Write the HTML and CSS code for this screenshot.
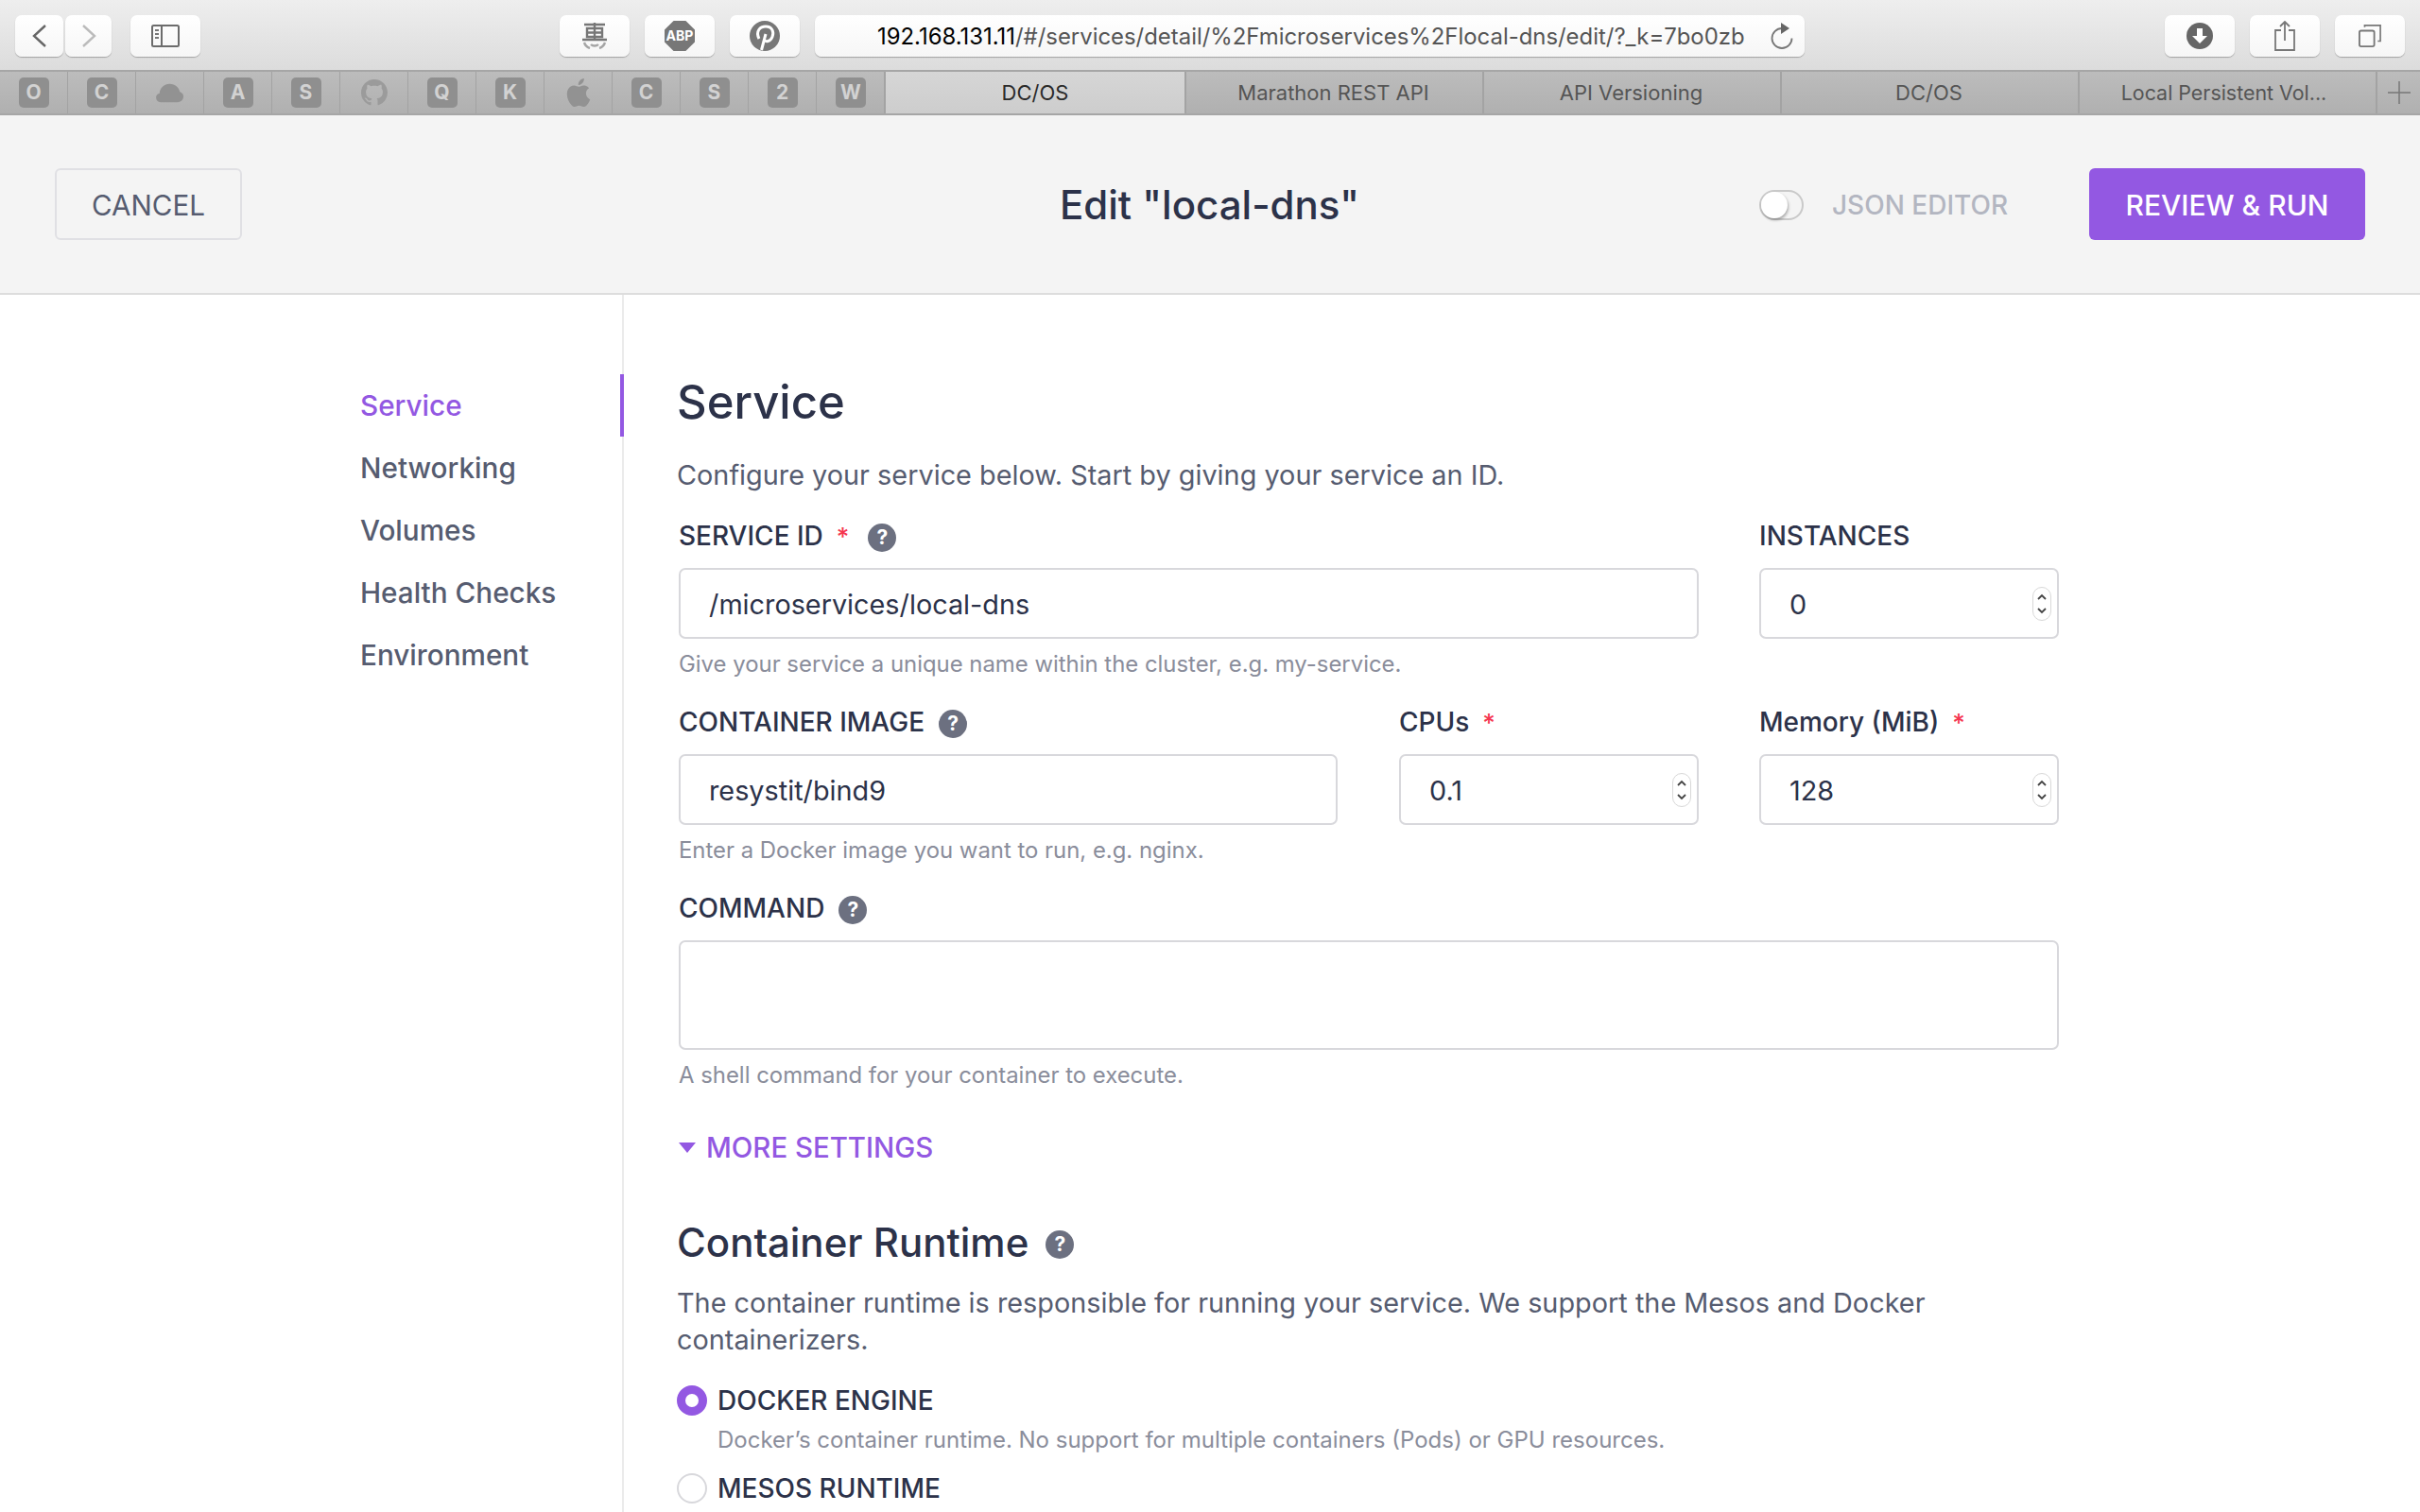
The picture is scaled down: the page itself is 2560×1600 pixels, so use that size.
FILE: index.html
```html
<!DOCTYPE html>
<html lang="en">
<head>
  <meta charset="UTF-8" />
  <title>DC/OS - Edit service</title>
  <link rel="stylesheet" href="styles.css">
</head>
<body>
  <div class="toolbar">
    <div class="tool-btn nav-left">
      <svg width="16" height="24" viewBox="0 0 16 24"><path d="M14 1 2 12l12 11" fill="none" stroke="#666" stroke-width="2.4"/></svg>
    </div>
    <div class="tool-btn nav-right">
      <svg width="16" height="24" viewBox="0 0 16 24"><path d="M2 1l12 11L2 23" fill="none" stroke="#bbb" stroke-width="2.4"/></svg>
    </div>
    <div class="tool-btn sidebar-btn">
      <svg width="30" height="24" viewBox="0 0 30 24"><rect x="1" y="1" width="28" height="22" rx="1.5" fill="none" stroke="#6c6c6c" stroke-width="2"/><path d="M11 1v22" stroke="#6c6c6c" stroke-width="2"/><path d="M4 6h4M4 10h4M4 14h4" stroke="#777" stroke-width="2"/></svg>
    </div>

    <div class="ext-group">
      <div class="tool-btn ext-btn">
        <svg width="32" height="28" viewBox="0 0 32 28"><g fill="none" stroke="#777" stroke-width="2.4"><path d="M5 2h22M16 0v18M8 6h16v9H8zM8 10.500h16M3 18h26"/><path d="M5 21c1 3 3 5 6 6M27 21c-1 3-3 5-6 6M12 23c2 2 6 2 8 0" stroke="#a5a5a5"/></g></svg>
      </div>
      <div class="tool-btn ext-btn">
        <div class="abp-icon">ABP</div>
      </div>
      <div class="tool-btn ext-btn">
        <svg width="32" height="32" viewBox="0 0 32 32"><circle cx="16" cy="16" r="16" fill="#777"/><path d="M12.500 31 17 14M10 19C6 11 11 6 17 6c7 0 9 6 7 11-2 5-7 6-9 3" fill="none" stroke="#fff" stroke-width="3"/></svg>
      </div>
    </div>

    <div class="url-bar">
      <div class="url-text"><span class="url-host">192.168.131.11</span>/#/services/detail/%2Fmicroservices%2Flocal-dns/edit/?_k=7bo0zb</div>
      <svg class="reload" width="24" height="30" viewBox="12 8 24 30"><path d="M24 15a10.500 10.500 0 1 0 10.500 10.500" fill="none" stroke="#777" stroke-width="1.800"/><path d="M23 9l9 6-9 6z" fill="#666"/></svg>
    </div>

    <div class="tool-btn right-btn">
      <svg width="28" height="28" viewBox="0 0 28 28"><circle cx="14" cy="14" r="14" fill="#666"/><path d="M11 6h6v8h5l-8 8-8-8h5z" fill="#fff"/></svg>
    </div>
    <div class="tool-btn right-btn">
      <svg width="24" height="32" viewBox="0 0 24 32"><path d="M8 10H2v21h20V10h-6" fill="none" stroke="#777" stroke-width="1.800"/><path d="M12 21V2M7 6l5-5 5 5" fill="none" stroke="#777" stroke-width="1.800"/></svg>
    </div>
    <div class="tool-btn right-btn">
      <svg width="24" height="24" viewBox="0 0 26 26"><rect x="1" y="7" width="17" height="18" rx="2" fill="none" stroke="#777" stroke-width="2"/><path d="M7 3V1h18v18h-3" fill="none" stroke="#777" stroke-width="1.800"/></svg>
    </div>
  </div>

  <div class="tabbar">
    <div class="fav"><span class="fav-box">O</span></div>
    <div class="fav"><span class="fav-box">C</span></div>
    <div class="fav">
      <svg width="31" height="21" viewBox="0 0 32 26" preserveAspectRatio="none"><path d="M7 25a6 6 0 0 1-2-11.600C5 7 10 1 16 1s10 5 11 10a7.500 7.500 0 0 1-2 14z" fill="#929292"/></svg>
    </div>
    <div class="fav"><span class="fav-box">A</span></div>
    <div class="fav"><span class="fav-box">S</span></div>
    <div class="fav">
      <svg width="28" height="28" viewBox="0 0 16 16"><path fill="#9b9b9b" d="M8 0C3.580 0 0 3.580 0 8c0 3.540 2.290 6.530 5.470 7.590.4.070.55-.17.55-.38 0-.19-.01-.82-.01-1.490-2.010.37-2.530-.49-2.690-.94-.09-.23-.48-.94-.82-1.130-.28-.15-.68-.52-.01-.53.63-.01 1.080.58 1.230.82.72 1.210 1.870.87 2.330.66.070-.52.28-.87.51-1.070-1.780-.2-3.640-.89-3.640-3.950 0-.87.31-1.590.82-2.150-.08-.2-.36-1.020.08-2.120 0 0 .67-.21 2.200.82.64-.18 1.320-.27 2-.27.68 0 1.360.09 2 .27 1.530-1.040 2.200-.82 2.200-.82.44 1.100.16 1.920.08 2.120.51.56.82 1.270.82 2.150 0 3.070-1.870 3.750-3.650 3.950.29.25.54.73.54 1.480 0 1.070-.01 1.930-.01 2.200 0 .21.15.46.55.38A8.013 8.013 0 0 0 16 8c0-4.420-3.580-8-8-8z"/></svg>
    </div>
    <div class="fav"><span class="fav-box">Q</span></div>
    <div class="fav"><span class="fav-box">K</span></div>
    <div class="fav">
      <svg width="38" height="38" viewBox="0 0 24 24"><path fill="#929292" d="M17 12.500c0-2.300 1.900-3.400 2-3.500-1.100-1.600-2.800-1.800-3.400-1.800-1.400-.1-2.800.9-3.500.9-.7 0-1.900-.8-3.100-.8-1.600 0-3.100.9-3.900 2.300-1.700 2.900-.4 7.200 1.200 9.500.8 1.100 1.700 2.400 3 2.400 1.200 0 1.700-.8 3.100-.8 1.400 0 1.900.8 3.100.8 1.300 0 2.100-1.100 2.900-2.300.9-1.300 1.300-2.600 1.300-2.700-.1 0-2.600-1-2.700-4zM14.700 5.600c.7-.8 1.100-1.900 1-3-1 0-2.100.6-2.800 1.400-.6.7-1.200 1.900-1 2.900 1.100.1 2.200-.5 2.800-1.300z"/></svg>
    </div>
    <div class="fav"><span class="fav-box">C</span></div>
    <div class="fav"><span class="fav-box">S</span></div>
    <div class="fav"><span class="fav-box">2</span></div>
    <div class="fav fav-last"><span class="fav-box">W</span></div>
    <div class="tab tab-active">DC/OS</div>
    <div class="tab">Marathon REST API</div>
    <div class="tab">API Versioning</div>
    <div class="tab">DC/OS</div>
    <div class="tab tab-last">Local Persistent Vol...</div>
    <div class="tab-add">
      <svg width="24" height="24" viewBox="0 0 24 24"><path d="M12 0v24M0 12h24" stroke="#777" stroke-width="1.500"/></svg>
    </div>
  </div>

  <header class="page-header">
    <button class="btn btn-cancel">CANCEL</button>
    <h2 class="page-title">Edit "local-dns"</h2>
    <div class="json-toggle">
      <span class="switch"><span class="knob"></span></span>
      <span class="json-label">JSON EDITOR</span>
    </div>
    <button class="btn btn-run">REVIEW &amp; RUN</button>
  </header>

  <div class="main">
    <nav class="side-nav">
      <a class="nav-item active">Service</a>
      <a class="nav-item">Networking</a>
      <a class="nav-item">Volumes</a>
      <a class="nav-item">Health Checks</a>
      <a class="nav-item">Environment</a>
    </nav>

    <section class="content">
      <h1>Service</h1>
      <p class="lead">Configure your service below. Start by giving your service an ID.</p>

      <div class="form-row">
        <div class="field col-wide">
          <label>SERVICE ID <span class="req">*</span> <span class="help">?</span></label>
          <div class="input">/microservices/local-dns</div>
          <div class="hint">Give your service a unique name within the cluster, e.g. my-service.</div>
        </div>
        <div class="field col-small">
          <label>INSTANCES</label>
          <div class="input">0<span class="spin"><svg width="14" height="28" viewBox="0 0 12 28"><path d="M2 9l4-4 4 4M2 19l4 4 4-4" fill="none" stroke="#444" stroke-width="1.800"/></svg></span></div>
        </div>
      </div>

      <div class="form-row">
        <div class="field col-image">
          <label>CONTAINER IMAGE <span class="help">?</span></label>
          <div class="input">resystit/bind9</div>
          <div class="hint">Enter a Docker image you want to run, e.g. nginx.</div>
        </div>
        <div class="field col-small">
          <label>CPUs <span class="req">*</span></label>
          <div class="input">0.1<span class="spin"><svg width="14" height="28" viewBox="0 0 12 28"><path d="M2 9l4-4 4 4M2 19l4 4 4-4" fill="none" stroke="#444" stroke-width="1.800"/></svg></span></div>
        </div>
        <div class="field col-small">
          <label>Memory (MiB) <span class="req">*</span></label>
          <div class="input">128<span class="spin"><svg width="14" height="28" viewBox="0 0 12 28"><path d="M2 9l4-4 4 4M2 19l4 4 4-4" fill="none" stroke="#444" stroke-width="1.800"/></svg></span></div>
        </div>
      </div>

      <div class="form-row">
        <div class="field col-full">
          <label>COMMAND <span class="help">?</span></label>
          <div class="input textarea"></div>
          <div class="hint">A shell command for your container to execute.</div>
        </div>
      </div>

      <a class="more-settings"><span class="caret"></span>MORE SETTINGS</a>

      <h3 class="section-title">Container Runtime <span class="help help-big">?</span></h3>
      <p class="lead lead-wrap">The container runtime is responsible for running your service. We support the Mesos and Docker containerizers.</p>

      <div class="radio-row">
        <span class="radio radio-on"></span>
        <span class="radio-label">DOCKER ENGINE</span>
      </div>
      <div class="radio-desc">Docker’s container runtime. No support for multiple containers (Pods) or GPU resources.</div>
      <div class="radio-row">
        <span class="radio"></span>
        <span class="radio-label">MESOS RUNTIME</span>
      </div>
    </section>
  </div>
</body>
</html>
```

FILE: styles.css
```css
* {
  box-sizing: border-box;
}
html, body {
  height: 1600px;
  overflow: hidden;
}
body {
  font-family: 'Inter', 'Noto Sans', sans-serif;
  background: #ffffff;
  color: #2c3249;
  margin: 0;
  padding: 0;
}

/* browser chrome */
.toolbar {
  height: 74px;
  padding: 16px 16px 14px;
  display: flex;
  align-items: stretch;
  background: linear-gradient(#eeeeee, #dcdcdc);
}
.tool-btn {
  display: flex;
  align-items: center;
  justify-content: center;
  background: linear-gradient(#ffffff, #f6f6f6);
  border-radius: 7px;
  box-shadow: 0 1px 1px rgba(0, 0, 0, 0.28);
}
.nav-left { width: 51px; }
.nav-right { width: 49px; margin-left: 2px; }
.sidebar-btn { width: 74px; margin-left: 20px; }
.ext-group {
  display: flex;
  gap: 16px;
  margin-left: 380px;
}
.ext-btn { width: 74px; }
.abp-icon {
  width: 32px;
  height: 32px;
  background: #777777;
  color: #ffffff;
  font-size: 14px;
  font-weight: 700;
  line-height: 32px;
  text-align: center;
  clip-path: polygon(30% 0, 70% 0, 100% 30%, 100% 70%, 70% 100%, 30% 100%, 0 70%, 0 30%);
}
.url-bar {
  width: 1047px;
  margin-left: 16px;
  margin-right: 381px;
  padding-left: 66px;
  display: flex;
  align-items: center;
  justify-content: space-between;
  background: linear-gradient(#ffffff, #f6f6f6);
  border-radius: 7px;
  box-shadow: 0 1px 1px rgba(0, 0, 0, 0.28);
  font-size: 23.9px;
  color: #555555;
  white-space: nowrap;
}
.url-host { color: #000000; }
.reload { margin-right: 12px; }
.right-btn { width: 74px; margin-left: 16px; }
.url-bar + .right-btn { margin-left: 0; }

.tabbar {
  height: 48px;
  display: flex;
  background: linear-gradient(#bcbcbc, #b0b0b0);
  border-top: 2px solid #a6a6a6;
  border-bottom: 2px solid #a6a6a6;
}
.fav {
  width: 72px;
  flex: none;
  display: flex;
  align-items: center;
  justify-content: center;
  border-right: 1px solid #a3a3a3;
}
.fav-last { border-right: none; }
.fav-box {
  width: 32px;
  height: 32px;
  border-radius: 5px;
  background: #8f8f8f;
  color: #d2d2d2;
  font-size: 21px;
  font-weight: 700;
  line-height: 32px;
  text-align: center;
}
.tab {
  width: 315px;
  flex: none;
  padding-right: 2px;
  display: flex;
  align-items: center;
  justify-content: center;
  border-left: 2px solid #a3a3a3;
  font-size: 22px;
  color: #555555;
}
.tab-active {
  width: 318px;
  margin-left: -1px;
  padding-right: 0;
  background: linear-gradient(#d6d6d6, #cdcdcd);
  color: #2a2a2a;
}
.tab-last {
  padding-right: 8px;
  font-size: 21.4px;
}
.tab-add {
  flex: 1;
  display: flex;
  align-items: center;
  justify-content: center;
  border-left: 2px solid #a3a3a3;
}

/* page header */
.page-header {
  height: 190px;
  padding: 56px 58px 0;
  display: flex;
  align-items: flex-start;
  background: #f4f4f4;
  border-bottom: 2px solid #dddddd;
}
.btn {
  height: 76px;
  padding: 1px 0 0;
  border-radius: 6px;
  font-family: inherit;
  font-size: 30px;
}
.btn-cancel {
  width: 198px;
  background: transparent;
  border: 2px solid #e0e0e4;
  color: #565c70;
  font-size: 29.6px;
}
.page-title {
  margin: 0 0 0 865px;
  font-size: 42px;
  font-weight: 500;
  line-height: 78px;
  white-space: nowrap;
  color: #2c3249;
}
.json-toggle {
  width: 349px;
  height: 78px;
  margin-left: auto;
  display: flex;
  align-items: center;
  gap: 30px;
}
.switch {
  width: 47px;
  height: 32px;
  border: 2px solid #c9c9c9;
  border-radius: 16px;
  display: block;
}
.knob {
  display: block;
  width: 28px;
  height: 28px;
  border-radius: 50%;
  background: #ffffff;
  box-shadow: 1px 2px 3px rgba(0, 0, 0, 0.3);
}
.json-label {
  font-size: 28px;
  font-weight: 500;
  color: #b3b6c1;
}
.btn-run {
  width: 292px;
  background: #9358e2;
  border: none;
  color: #ffffff;
  font-weight: 500;
}

/* main layout */
.main {
  display: flex;
  height: 1288px;
}
.side-nav {
  width: 660px;
  flex: none;
  padding: 84px 0 0 381px;
  border-right: 2px solid #ebebeb;
  font-size: 29.7px;
  font-weight: 500;
}
.nav-item {
  display: block;
  height: 66px;
  line-height: 67px;
  margin-right: -2px;
  color: #565c70;
}
.nav-item.active {
  color: #9358e2;
  border-right: 4px solid #9358e2;
}
.content {
  flex: 1;
  padding: 84px 0 0 56px;
}
h1 {
  margin: 0;
  font-size: 49px;
  font-weight: 500;
  line-height: 60px;
  color: #2c3249;
}
.lead {
  width: 1462px;
  margin: 27px 0 28px;
  font-size: 28.85px;
  line-height: 39px;
  color: #565c70;
}
.form-row {
  display: flex;
  gap: 64px;
  margin-left: 2px;
}
.field {
  height: 197px;
  flex: none;
}
.col-wide { width: 1079px; }
.col-image { width: 697px; margin-right: 1px; }
.col-small { width: 317px; }
.col-full { width: 1460px; height: auto; }
label {
  display: flex;
  align-items: center;
  height: 34px;
  margin-bottom: 17px;
  font-size: 28px;
  font-weight: 500;
  color: #2c3249;
}
.req {
  margin: 0 20px 0 14px;
  color: #f5364f;
  font-size: 26px;
}
.help {
  width: 30px;
  height: 30px;
  margin-top: 3px;
  margin-left: 15px;
  border-radius: 50%;
  background: #6c7080;
  color: #ffffff;
  font-size: 21px;
  font-weight: 700;
  line-height: 30px;
  text-align: center;
  display: inline-block;
}
.req + .help { margin-left: 0; }
.input {
  height: 75px;
  padding: 1px 0 0 30px;
  display: flex;
  align-items: center;
  justify-content: space-between;
  border: 2px solid #d8d8dc;
  border-radius: 7px;
  font-size: 28.8px;
  color: #2c3249;
}
.textarea { height: 116px; }
.spin {
  width: 20px;
  height: 36px;
  margin-right: 6px;
  display: flex;
  align-items: center;
  justify-content: center;
  border: 1px solid #d8d8d8;
  border-radius: 10px;
}
.hint {
  margin-top: 11px;
  font-size: 23.9px;
  line-height: 32px;
  color: #8a8d9b;
}
.more-settings {
  display: flex;
  align-items: center;
  height: 40px;
  margin: 40px 0 0 2px;
  font-size: 29.4px;
  font-weight: 500;
  color: #9358e2;
}
.caret {
  width: 0;
  height: 0;
  margin-right: 11px;
  border-left: 9px solid transparent;
  border-right: 9px solid transparent;
  border-top: 11px solid #9358e2;
}
.section-title {
  display: flex;
  align-items: center;
  height: 50px;
  margin: 55px 0 0;
  font-size: 42px;
  font-weight: 500;
  color: #2c3249;
}
.help-big { margin-left: 18px; margin-top: 6px; }
.lead-wrap { margin: 20px 0 25px; }
.radio-row {
  display: flex;
  align-items: center;
  gap: 11px;
  height: 40px;
  font-size: 28px;
  font-weight: 500;
  color: #2c3249;
}
.radio {
  width: 32px;
  height: 32px;
  border-radius: 50%;
  border: 2px solid #d8d8dc;
  flex: none;
}
.radio-on {
  border: 9px solid #9358e2;
}
.radio-desc {
  margin: 6px 0 15px 43px;
  font-size: 24px;
  line-height: 32px;
  color: #8a8d9b;
}
```
